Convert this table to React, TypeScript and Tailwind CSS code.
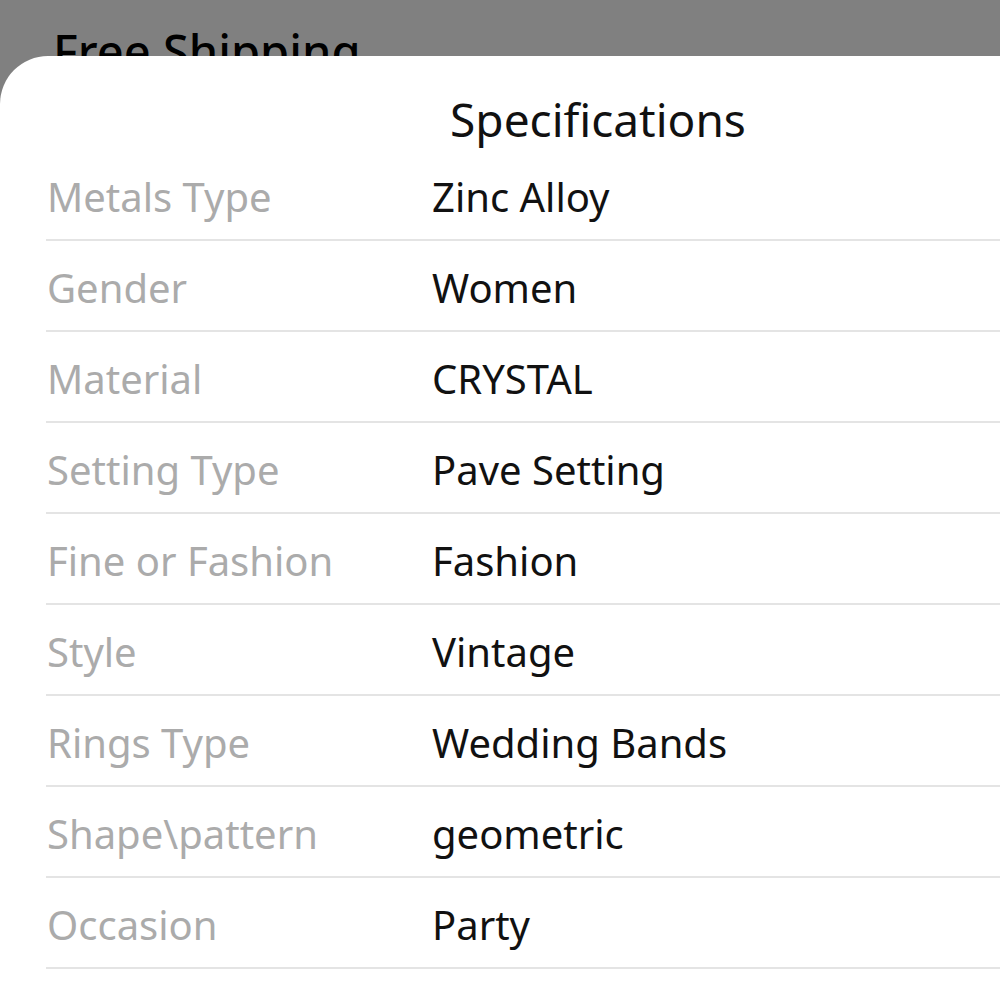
const specs = [
  { label: "Metals Type", value: "Zinc Alloy" },
  { label: "Gender", value: "Women" },
  { label: "Material", value: "CRYSTAL" },
  { label: "Setting Type", value: "Pave Setting" },
  { label: "Fine or Fashion", value: "Fashion" },
  { label: "Style", value: "Vintage" },
  { label: "Rings Type", value: "Wedding Bands" },
  { label: "Shape\\pattern", value: "geometric" },
  { label: "Occasion", value: "Party" },
  { label: "Compatibility", value: "All Compatible" },
];

export default function App() {
  return (
    <div
      className="relative w-[1000px] h-[1000px] overflow-hidden bg-[#808080]"
      style={{ fontFamily: '"Noto Sans", "Open Sans", sans-serif' }}
    >
      <div className="pl-[53px] pt-[24px] text-[47px] leading-[54px] font-medium text-black">
        Free Shipping
      </div>

      <div className="absolute top-[56px] left-0 w-[1196px] h-[1200px] bg-white rounded-tl-[48px]">
        <h2 className="h-[94px] pt-[36px] text-center text-[46px] leading-[54px] text-[#111]">
          Specifications
        </h2>
        <div className="pl-[46px]">
          {specs.map((s) => (
            <div
              key={s.label}
              className="flex h-[91px] pt-[23px] border-b-2 border-[#e4e4e4]"
            >
              <span className="w-[386px] shrink-0 pl-[1px] text-[40px] leading-[48px] text-[#ababab]">
                {s.label}
              </span>
              <span className="text-[40px] leading-[48px] text-[#111]">
                {s.value}
              </span>
            </div>
          ))}
        </div>
      </div>
    </div>
  );
}
